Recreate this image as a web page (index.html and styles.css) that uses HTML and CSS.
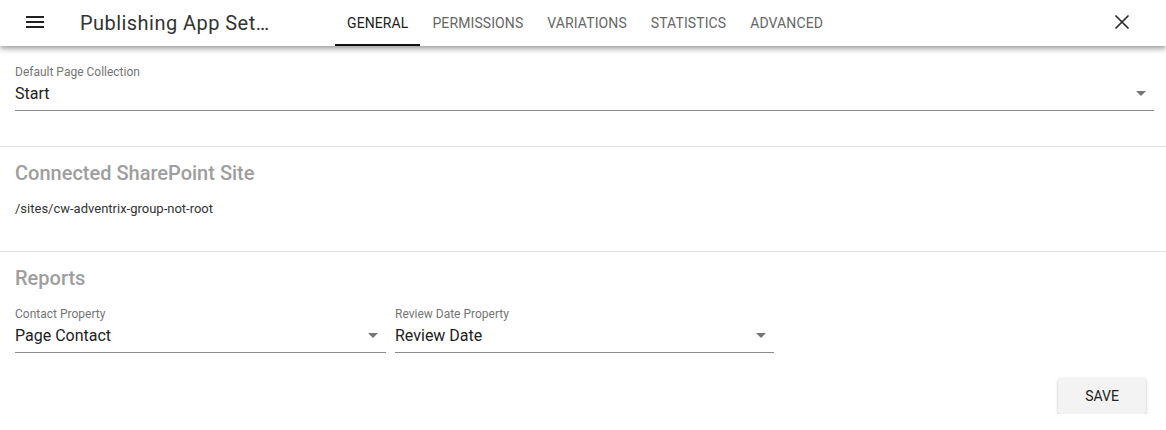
FILE: index.html
```html
<!DOCTYPE html>
<html>
<head>
<meta charset="utf-8">
<link rel="stylesheet" href="styles.css">
</head>
<body>
<header class="toolbar">
  <button class="icon-btn menu" aria-label="menu">
    <svg width="24" height="24" viewBox="0 0 24 24"><path d="M3 18h18v-2H3v2zm0-5h18v-2H3v2zm0-7v2h18V6H3z" fill="#212121"/></svg>
  </button>
  <div class="title">Publishing App Set…</div>
  <nav class="tabs">
    <div class="tab active">General</div>
    <div class="tab">Permissions</div>
    <div class="tab">Variations</div>
    <div class="tab">Statistics</div>
    <div class="tab">Advanced</div>
  </nav>
  <button class="icon-btn close" aria-label="close">
    <svg width="24" height="24" viewBox="0 0 24 24"><path d="M5.5 5.5L18.5 18.5M18.5 5.5L5.5 18.5" stroke="#2a2a2a" stroke-width="1.7" fill="none"/></svg>
  </button>
</header>

<main class="content">
  <section class="section first">
    <div class="field full">
      <label class="field-label">Default Page Collection</label>
      <div class="select">
        <span class="value">Start</span>
        <span class="arrow"></span>
      </div>
    </div>
  </section>

  <section class="section">
    <h2 class="section-title">Connected SharePoint Site</h2>
    <p class="site-path">/sites/cw-adventrix-group-not-root</p>
  </section>

  <section class="section last">
    <h2 class="section-title">Reports</h2>
    <div class="field-row">
      <div class="field contact">
        <label class="field-label">Contact Property</label>
        <div class="select">
          <span class="value">Page Contact</span>
          <span class="arrow"></span>
        </div>
      </div>
      <div class="field review">
        <label class="field-label">Review Date Property</label>
        <div class="select">
          <span class="value">Review Date</span>
          <span class="arrow"></span>
        </div>
      </div>
    </div>
    <div class="actions">
      <button class="save-btn">Save</button>
    </div>
  </section>
</main>
</body>
</html>
```

FILE: styles.css
```css
* { box-sizing: border-box; }

html, body {
  margin: 0;
  padding: 0;
  background: #fff;
  font-family: Roboto, "Liberation Sans", Arial, sans-serif;
  color: #212121;
}

.toolbar {
  position: relative;
  z-index: 2;
  height: 46px;
  display: flex;
  align-items: stretch;
  background: #fff;
  box-shadow: 0 2px 4px -1px rgba(0,0,0,0.25), 0 4px 5px 0 rgba(0,0,0,0.16), 0 1px 10px 0 rgba(0,0,0,0.10);
}

.icon-btn {
  border: 0;
  background: transparent;
  padding: 0;
  width: 48px;
  display: flex;
  align-items: center;
  justify-content: center;
  cursor: pointer;
}

.icon-btn svg { display: block; }

.menu {
  margin-left: 11px;
  padding-bottom: 2px;
}

.title {
  margin-left: 21px;
  width: 255px;
  display: flex;
  align-items: center;
  font-size: 20px;
  font-weight: 400;
  color: #333;
  letter-spacing: 0.45px;
  white-space: nowrap;
}

.tabs {
  display: flex;
  align-items: stretch;
}

.tab {
  padding: 1px 12px 0;
  display: flex;
  align-items: center;
  font-size: 14px;
  text-transform: uppercase;
  color: #666;
  letter-spacing: 0.1px;
  border-bottom: 2px solid transparent;
}

.tab.active {
  color: #212121;
  border-bottom-color: #111;
}

.close {
  margin-left: auto;
  margin-right: 20px;
  padding-bottom: 2px;
}

.content {
  display: flex;
  flex-direction: column;
}

.section {
  border-bottom: 1px solid #e0e0e0;
  padding: 0 12px 0 15px;
}

.section.first {
  padding-top: 18px;
  height: 101px;
}

.section.last {
  border-bottom: 0;
}

.field-label {
  display: block;
  font-size: 12px;
  line-height: 16px;
  color: #757575;
}

.select {
  display: flex;
  align-items: center;
  height: 31px;
  border-bottom: 1px solid #8a8a8a;
  padding-bottom: 4px;
}

.value {
  flex: 1;
  font-size: 16px;
  color: #212121;
}

.arrow {
  width: 0;
  height: 0;
  border-left: 5px solid transparent;
  border-right: 5px solid transparent;
  border-top: 5px solid #757575;
  margin-right: 8px;
}

.section-title {
  margin: 0;
  padding-top: 14px;
  font-size: 20px;
  line-height: 24px;
  font-weight: 500;
  color: #9e9e9e;
}

.site-path {
  margin: 0;
  padding-top: 16px;
  padding-bottom: 34px;
  font-size: 13px;
  line-height: 16px;
  color: #333;
}

.field-row {
  display: flex;
  gap: 9px;
  margin-top: 16px;
}

.field.contact { width: 371px; }
.field.review { width: 379px; }

.actions {
  display: flex;
  justify-content: flex-end;
  padding-top: 25px;
  padding-right: 8px;
}

.save-btn {
  width: 88px;
  height: 36px;
  border: 0;
  border-radius: 2px;
  background: #f3f3f3;
  font-family: Roboto, "Liberation Sans", Arial, sans-serif;
  font-size: 14px;
  font-weight: 400;
  text-transform: uppercase;
  color: #212121;
  box-shadow: 0 2px 2px 0 rgba(0,0,0,0.18), 0 1px 4px 0 rgba(0,0,0,0.12);
}
```
